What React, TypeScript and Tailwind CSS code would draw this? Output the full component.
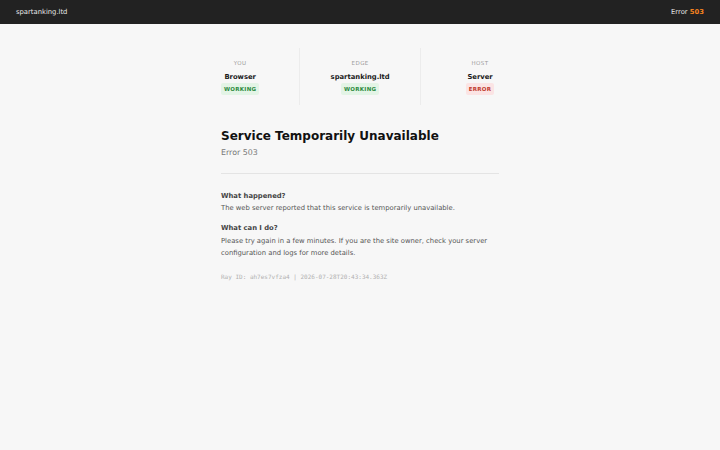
import React from "react";

const sans = { fontFamily: '"DejaVu Sans", sans-serif' };

function Status({
  label,
  name,
  state,
  ok,
}: {
  label: string;
  name: string;
  state: string;
  ok: boolean;
}) {
  return (
    <div className="flex min-w-[38px] flex-col items-center">
      <div className="text-[5.5px] uppercase tracking-[0.08em] text-[#9a9a9a]">{label}</div>
      <div className="mt-[5px] text-[6.8px] font-bold text-[#1a1a1a]">{name}</div>
      <div
        className={
          ok
            ? "mt-[1px] rounded-[2px] bg-[#e3f4e6] px-[3px] py-[1.5px] text-[5.5px] font-bold tracking-[0.05em] text-[#2b8a3e]"
            : "mt-[1px] rounded-[2px] bg-[#fbe4e4] px-[3px] py-[1.5px] text-[5.5px] font-bold tracking-[0.05em] text-[#c0392b]"
        }
      >
        {state}
      </div>
    </div>
  );
}

export default function App() {
  return (
    <div className="min-h-[450px] bg-[#f7f7f7]" style={sans}>
      <header className="flex h-[24px] items-center justify-between bg-[#222222] px-4 text-[6.8px] text-[#e8e8e8]">
        <span>spartanking.ltd</span>
        <span>
          Error <span className="font-bold text-[#f6821f]">503</span>
        </span>
      </header>

      <main className="mx-auto w-[278px] pt-6">
        <div className="flex">
          <div className="border-r border-[#ececec] pb-[10px] pr-10 pt-[11px]">
            <Status label="You" name="Browser" state="WORKING" ok />
          </div>
          <div className="flex flex-1 justify-center pt-[11px]">
            <Status label="Edge" name="spartanking.ltd" state="WORKING" ok />
          </div>
          <div className="border-l border-[#ececec] pl-10 pt-[11px]">
            <Status label="Host" name="Server" state="ERROR" ok={false} />
          </div>
        </div>

        <h1 className="mt-[22px] text-[12px] font-bold text-[#111111]">
          Service Temporarily Unavailable
        </h1>
        <p className="mt-[2px] text-[7.9px] text-[#777777]">Error 503</p>

        <hr className="mt-[14px] border-[#e4e4e4]" />

        <div className="mt-[16px] text-[6.8px] leading-[12.5px] text-[#555555]">
          <h2 className="font-bold text-[#444444]">What happened?</h2>
          <p>The web server reported that this service is temporarily unavailable.</p>
          <h2 className="mt-[7.5px] font-bold text-[#444444]">What can I do?</h2>
          <p>
            Please try again in a few minutes. If you are the site owner, check your server
            configuration and logs for more details.
          </p>
        </div>

        <p
          className="mt-[12px] text-[6px] text-[#b0b0b0]"
          style={{ fontFamily: '"DejaVu Sans Mono", monospace' }}
        >
          Ray ID: ah7es7vfza4 | 2026-07-28T20:43:34.363Z
        </p>
      </main>
    </div>
  );
}
